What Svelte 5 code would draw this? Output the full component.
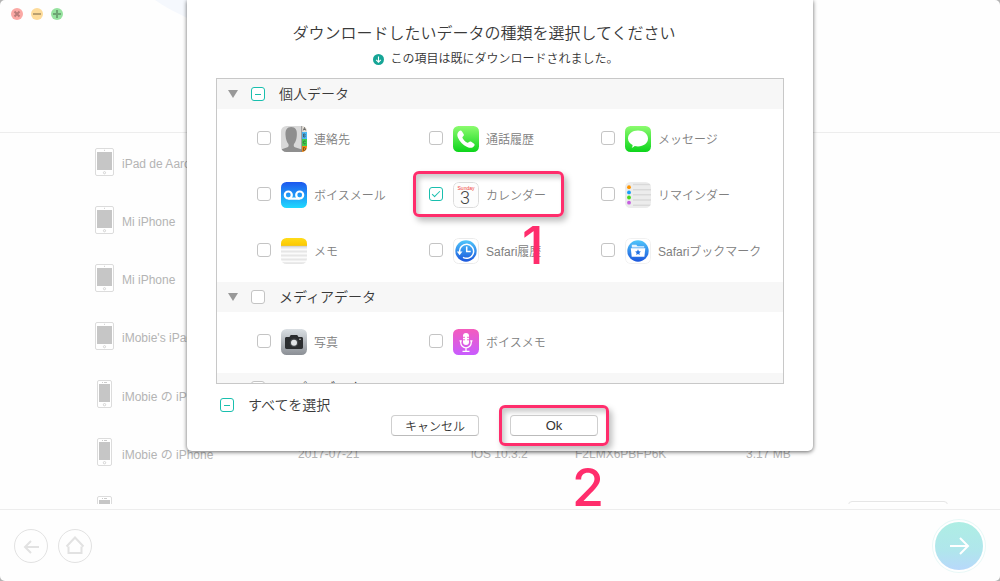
<script>
  const devices = [
    { name: 'iPad de Aaron', kind: 'tablet' },
    { name: 'Mi iPhone', kind: 'tablet' },
    { name: 'Mi iPhone', kind: 'tablet' },
    { name: "iMobie's iPad", kind: 'tablet' },
    { name: 'iMobie の iPhone', kind: 'phone' },
    {
      name: 'iMobie の iPhone',
      kind: 'phone',
      date: '2017-07-21',
      os: 'iOS 10.3.2',
      serial: 'F2LMX6PBFP6K',
      size: '3.17 MB'
    },
    { name: '', kind: 'phone', action: true }
  ];

  let groups = $state([
    {
      title: '個人データ',
      checked: false,
      partial: true,
      items: [
        { id: 'contacts', label: '連絡先', checked: false },
        { id: 'calls', label: '通話履歴', checked: false },
        { id: 'messages', label: 'メッセージ', checked: false },
        { id: 'voicemail', label: 'ボイスメール', checked: false },
        { id: 'calendar', label: 'カレンダー', checked: true, step: '1' },
        { id: 'reminders', label: 'リマインダー', checked: false },
        { id: 'notes', label: 'メモ', checked: false },
        { id: 'history', label: 'Safari履歴', checked: false },
        { id: 'bookmarks', label: 'Safariブックマーク', checked: false }
      ]
    },
    {
      title: 'メディアデータ',
      checked: false,
      partial: false,
      items: [
        { id: 'photos', label: '写真', checked: false },
        { id: 'memos', label: 'ボイスメモ', checked: false }
      ]
    },
    { title: 'アプリデータ', checked: false, partial: false, items: [] }
  ]);

  let all = $state({ checked: false, partial: true });
</script>

{#snippet appIcon(id)}
  <svg class="app-icon" viewBox="0 0 26 26" aria-hidden="true">
    <defs>
      <clipPath id="tile-{id}"><rect width="26" height="26" rx="5.5" /></clipPath>
      <linearGradient id="green-{id}" x2="0" y2="1"><stop stop-color="#8cfb6f" /><stop offset="1" stop-color="#0cd41b" /></linearGradient>
      <linearGradient id="blue-{id}" x2="0" y2="1"><stop stop-color="#1d57ee" /><stop offset="1" stop-color="#1fd9ff" /></linearGradient>
      <linearGradient id="round-{id}" x2="0" y2="1"><stop stop-color="#4fc6fb" /><stop offset="1" stop-color="#1a55dc" /></linearGradient>
      <linearGradient id="grey-{id}" x2="0" y2="1"><stop stop-color="#dadfe3" /><stop offset="1" stop-color="#8b8f95" /></linearGradient>
      <linearGradient id="pink-{id}" x2="0" y2="1"><stop stop-color="#f45cbd" /><stop offset="1" stop-color="#c85cff" /></linearGradient>
      <linearGradient id="gold-{id}" x2="0" y2="1"><stop stop-color="#ffdc1a" /><stop offset="1" stop-color="#fcc800" /></linearGradient>
    </defs>
    <g clip-path="url(#tile-{id})">
      {#if id === 'contacts'}
        <rect width="26" height="26" fill="#d9d9d9" />
        <path d="M0 26v-2.500l6.500-2.200c1.200-.5 1.400-1.800.9-3.200C5.600 16 4.900 12.800 4.600 10 3.900 4 6 1 10.200 1s6.300 3 5.600 9c-.3 2.800-1 6-2.800 8.100-.5 1.400-.3 2.700.9 3.200l7 2.200V26z" fill="#8f8f8f" />
        <rect x="21" width="5" height="6.500" fill="#e8e3da" />
        <rect x="21" y="6" width="5" height="7" fill="#4bb9f5" />
        <rect x="21" y="13" width="5" height="7" fill="#3fd04d" />
        <rect x="21" y="20" width="5" height="6" fill="#f88a10" />
        <path d="M20.700 0v26" stroke="#777" stroke-width=".7" />
        <path d="m22.300 4.500 1.200-3 1.200 3m-2-1h1.600M22.500 8v3h1.200a.8.800 0 0 0 0-1.500.8.800 0 0 0 0-1.500zM24.600 15.300c-1.800-.8-2.300.300-2.300 1.200s1 1.900 2.300 1.100M22.500 21.500v3c3 0 3-3 0-3z" stroke="#333" stroke-width=".6" fill="none" />
      {:else if id === 'calls'}
        <rect width="26" height="26" fill="url(#green-{id})" />
        <path d="M6 5.200c1.400-1.200 2.200-.9 3 .2l1.600 2.500c.6 1 .3 1.700-.4 2.300-.8.700-1 1.200-.5 2.100 1 1.800 2.400 3.200 4.200 4.300.9.500 1.400.3 2.100-.5.600-.7 1.400-.9 2.300-.3l2.400 1.600c1.100.8 1.300 1.600.2 2.900-1.700 2-4 1.800-6.700.6C9.700 18.900 6.700 15.800 5 11.800 3.900 9.200 4 6.900 6 5.200z" fill="#fff" />
      {:else if id === 'messages'}
        <rect width="26" height="26" fill="url(#green-{id})" />
        <path d="M13 4.500c5.700 0 10 3.500 10 8s-4.300 7.900-10 7.900c-1.200 0-2.300-.1-3.300-.4-.7.900-1.600 1.400-3 1.700.6-.8 1-1.700.9-2.700C4.800 17.500 3 15.200 3 12.500c0-4.500 4.300-8 10-8z" fill="#fff" />
      {:else if id === 'voicemail'}
        <rect width="26" height="26" fill="url(#blue-{id})" />
        <g fill="none" stroke="#fff" stroke-width="2.200"><circle cx="7.300" cy="13" r="3.500" /><circle cx="18.700" cy="13" r="3.500" /><path d="M7.300 16.700h11.400" /></g>
      {:else if id === 'calendar'}
        <rect x=".5" y=".5" width="25" height="25" rx="5" fill="#fdfdfd" stroke="#dcdcdc" />
        <text x="13" y="7.500" class="cal-day">Sunday</text>
        <text x="12" y="21.500" class="cal-num">3</text>
      {:else if id === 'reminders'}
        <rect width="26" height="26" fill="#ececec" />
        <path d="M8 2.500h18M8 7.800h18M8 12.800h18M8 18h18M8 23.200h18" stroke="#d9d9d9" stroke-width="1.600" />
        <circle cx="4" cy="5.200" r="1.900" fill="#ff9500" /><circle cx="4" cy="10.400" r="1.900" fill="#1a9ffb" />
        <circle cx="4" cy="15.500" r="1.900" fill="#4cd81f" /><circle cx="4" cy="20.700" r="1.900" fill="#c660e0" />
      {:else if id === 'notes'}
        <rect width="26" height="26" fill="#fbfbfb" />
        <path d="M0 9.500h26M0 13.500h26M0 17.500h26M0 21.500h26M0 25.200h26" stroke="#e6e6e6" stroke-width="1.800" />
        <rect width="26" height="8" fill="url(#gold-{id})" />
        <path d="M0 8.300h26" stroke="#c9c6bd" stroke-width=".8" />
      {:else if id === 'history'}
        <rect x=".5" y=".5" width="25" height="25" rx="5" fill="#fff" stroke="#ebebeb" />
        <circle cx="13" cy="13" r="10.700" fill="url(#round-{id})" />
        <path d="M6.700 14.500A7 7 0 1 1 10 19.300" fill="none" stroke="#fff" stroke-width="1.500" />
        <path d="m3.800 13.500 2.800 3.700 2.900-3.700z" fill="#fff" />
        <path d="M13.700 8.500v5h4" fill="none" stroke="#fff" stroke-width="1.500" />
      {:else if id === 'bookmarks'}
        <rect x=".5" y=".5" width="25" height="25" rx="5" fill="#fff" stroke="#f1f1f1" />
        <circle cx="13" cy="13" r="10.700" fill="url(#round-{id})" />
        <path d="M6.800 9.500V6.800h4.500l1.200 1.400h6.700v1.300z" fill="#fff" opacity=".85" />
        <path d="M5.800 10.300h14.500l-.9 8.400H6.700z" fill="#fff" />
        <path d="m13 11.300.9 1.900 2 .3-1.500 1.500.4 2.100-1.800-1-1.800 1 .4-2.100-1.500-1.500 2-.3z" fill="#2273e4" />
      {:else if id === 'photos'}
        <rect width="26" height="26" fill="url(#grey-{id})" />
        <path d="M4 9.500c0-1 .6-1.600 1.500-1.600h3L9.700 6h6.500l1.300 1.900h3c.9 0 1.500.6 1.500 1.600v8.800c0 1-.6 1.600-1.500 1.600h-15c-.9 0-1.500-.6-1.500-1.600z" fill="#2b2d2f" />
        <circle cx="13" cy="13.700" r="4.300" fill="#46494c" /><circle cx="13" cy="13.700" r="3" fill="#e3e5e7" /><circle cx="19" cy="10.200" r=".8" fill="#ddd" />
      {:else}
        <rect width="26" height="26" fill="url(#pink-{id})" />
        <rect x="10" y="4" width="6" height="12" rx="3" fill="#fff" />
        <path d="M10 8.300h2M14 8.300h2M10 10.800h2M14 10.800h2" stroke="#eb5ccb" stroke-width=".9" />
        <path d="M7.700 11.500v2a5.300 5.300 0 0 0 10.600 0v-2M13 18.800v3.500M9.500 22.300h7M6.500 11.800h2.300M17.200 11.800h2.300" fill="none" stroke="#fff" stroke-width="1.300" />
      {/if}
    </g>
  </svg>
{/snippet}

<div class="window">
  <header>
    <div class="lights">
      <button class="light red" aria-label="閉じる"><svg viewBox="0 0 12 12"><path d="m3.500 3.500 5 5m0-5-5 5" /></svg></button>
      <button class="light amber" aria-label="しまう"><svg viewBox="0 0 12 12"><path d="M2 6h8" /></svg></button>
      <button class="light green" aria-label="拡大"><svg viewBox="0 0 12 12"><path d="M2 6h8M6 2v8" /></svg></button>
    </div>
    <svg class="swoosh" viewBox="0 0 100 40" aria-hidden="true"><path d="M0 0h100v40H80C50 26 20 14 0 0z" fill="#f5f8fd" /></svg>
  </header>

  <ul class="devices">
    {#each devices as d}
      <li>
        <span class="device">
          {#if d.kind === 'tablet'}
            <svg width="19" height="28" viewBox="0 0 19 28" aria-hidden="true">
              <rect x=".5" y=".5" width="18" height="27" rx="1.500" fill="#fff" stroke="#dcdcdc" />
              <rect x="2" y="4" width="15" height="18" fill="#c6c6c6" /><circle cx="9.500" cy="24.700" r="1.100" fill="none" stroke="#ccc" stroke-width=".8" /><path d="M9 2.300h1" stroke="#ccc" />
            </svg>
          {:else}
            <svg width="19" height="28" viewBox="0 0 19 28" aria-hidden="true">
              <rect x="2.500" y=".5" width="14" height="27" rx="1.500" fill="#fff" stroke="#dcdcdc" />
              <rect x="4" y="4" width="11" height="18" fill="#c6c6c6" /><circle cx="9.500" cy="24.700" r="1.200" fill="none" stroke="#ccc" stroke-width=".8" /><path d="M7 2.500h1M9 2.500h3" stroke="#ccc" />
            </svg>
          {/if}
          <span>{d.name}</span>
        </span>
        <span>{d.date ?? ''}</span>
        <span>{d.os ?? ''}</span>
        <span>{d.serial ?? ''}</span>
        <span>{d.size ?? ''}</span>
        {#if d.action}<button class="row-action" aria-label="選択"></button>{/if}
      </li>
    {/each}
  </ul>

  <footer>
    <button class="nav" aria-label="戻る"><svg viewBox="0 0 34 34"><path d="M25 18H11M17 12l-6 6 6 6" /></svg></button>
    <button class="nav" aria-label="ホーム"><svg viewBox="0 0 34 34"><path d="m8.500 17.500 8.500-9 8.500 9M10.500 17.500V24h13v-6.500" /></svg></button>
    <button class="next" aria-label="次へ"><svg viewBox="0 0 48 48"><path d="M15 24h18M25 16l8 8-8 8" /></svg></button>
  </footer>

  <section class="sheet" role="dialog" aria-labelledby="sheet-title">
    <h1 id="sheet-title">ダウンロードしたいデータの種類を選択してください</h1>
    <p class="hint">
      <svg width="11" height="11" viewBox="0 0 11 11" aria-hidden="true"><circle cx="5.500" cy="5.500" r="5.500" fill="#16a596" /><path d="M5.500 2.500v5.500M3.200 5.800l2.300 2.300 2.300-2.300" fill="none" stroke="#fff" stroke-width="1.100" /></svg>
      この項目は既にダウンロードされました。
    </p>

    <div class="panel">
      {#each groups as g}
        <label class="group-head">
          <i class="twisty"></i>
          <input type="checkbox" bind:checked={g.checked} bind:indeterminate={g.partial} />
          <span class="caption">{g.title}</span>
        </label>
        {#if g.items.length}
          <div class="grid">
            {#each g.items as item}
              <label class="item">
                <input type="checkbox" bind:checked={item.checked} />
                {@render appIcon(item.id)}
                <span class="caption">{item.label}</span>
                {#if item.step}
                  <span class="ring ring-item"></span>
                  <b class="step step-item">{item.step}</b>
                {/if}
              </label>
            {/each}
          </div>
        {/if}
      {/each}
    </div>

    <label class="select-all">
      <input type="checkbox" bind:checked={all.checked} bind:indeterminate={all.partial} />
      すべてを選択
    </label>
    <div class="actions">
      <button class="push">キャンセル</button>
      <div class="marked">
        <button class="push ok">Ok</button>
        <span class="ring ring-ok"></span>
        <b class="step step-ok">2</b>
      </div>
    </div>
  </section>
</div>

<style>
  :global(body) {
    margin: 0;
    background: #b4b4b4;
  }
  .window {
    position: relative;
    display: flex;
    flex-direction: column;
    height: 100vh;
    overflow: hidden;
    border-radius: 5px;
    background: #fefefe;
    font-family: 'Liberation Sans', 'Noto Sans CJK JP', sans-serif;
    font-size: 12px;
    color: #333;
  }
  button {
    padding: 0;
    font: inherit;
    color: inherit;
  }
  svg {
    display: block;
    flex: none;
  }
  header {
    position: relative;
    flex: none;
    height: 132px;
    border-bottom: 1px solid #ededed;
  }
  .lights {
    display: flex;
    gap: 8px;
    padding: 8px 11px;
  }
  .light {
    width: 12px;
    height: 12px;
    border: 0;
    border-radius: 50%;
  }
  .light svg {
    width: 12px;
    height: 12px;
    fill: none;
    stroke: #0004;
    stroke-width: 2;
  }
  .red { background: #fba9a5; }
  .amber { background: #fddb9a; }
  .green { background: #96e29f; }
  .swoosh {
    position: absolute;
    top: 0;
    left: 155px;
    width: 100px;
  }
  .devices {
    flex: 1;
    min-height: 0;
    margin: 0 0 5px;
    padding: 0;
    overflow: hidden;
    list-style: none;
    color: #b4b4b4;
  }
  .devices li {
    display: grid;
    grid-template-columns: 203fr 173fr 104fr 171fr 102fr 100fr;
    align-items: center;
    height: 58px;
    padding: 0 52px 0 95px;
    white-space: nowrap;
  }
  .devices span {
    padding-top: 3px;
  }
  .devices .device {
    display: flex;
    align-items: center;
    gap: 8px;
    padding: 0;
  }
  .row-action {
    height: 18px;
    border: 1px solid #e6e6e6;
    border-radius: 4px;
    background: #fff;
  }
  footer {
    display: flex;
    flex: none;
    align-items: center;
    gap: 10px;
    height: 71px;
    padding: 0 17px 0 14px;
    border-top: 1px solid #ededed;
  }
  .nav {
    width: 34px;
    height: 34px;
    border: 1px solid #e2e2e2;
    border-radius: 50%;
    background: none;
  }
  .nav svg {
    margin: -1px;
    width: 34px;
    fill: none;
    stroke: #e2e2e2;
    stroke-width: 2;
  }
  .next {
    width: 48px;
    height: 48px;
    margin-left: auto;
    border: 0;
    border-radius: 50%;
    background: linear-gradient(#aeeee4, #b0e6ec 60%, #b8d8fb);
    box-shadow: 0 0 0 2px #fff, 0 0 0 3px #e9f8f7;
  }
  .next svg {
    fill: none;
    stroke: #fff;
    stroke-width: 2;
  }
  .sheet {
    position: absolute;
    top: 0;
    left: 50%;
    box-sizing: border-box;
    width: 626px;
    max-width: 94vw;
    padding: 23px 29px 15px;
    transform: translateX(-50%);
    border-radius: 0 0 5px 5px;
    background: #fff;
    box-shadow: 0 1px 4px #0009;
  }
  h1 {
    margin: 0 32px 0 0;
    font-size: 16px;
    font-weight: 350;
    line-height: 22px;
    text-align: center;
    color: #3a3a3a;
  }
  .hint {
    display: flex;
    align-items: center;
    justify-content: center;
    gap: 6px;
    margin: 5px 8px 10px 0;
    font-weight: 350;
    line-height: 18px;
  }
  .panel {
    height: 304px;
    overflow: hidden;
    border: 1px solid #c8c8c8;
  }
  .group-head {
    display: flex;
    align-items: center;
    height: 30px;
    padding-left: 11px;
    background: #f7f7f7;
    font-size: 14px;
    font-weight: 350;
    color: #3a3a3a;
  }
  .caption {
    padding-bottom: 2px;
  }
  .twisty {
    margin-right: 13px;
    border: 5px solid transparent;
    border-top: 8px solid #999;
    border-bottom: 0;
  }
  .group-head input {
    margin-right: 14px;
  }
  input {
    position: relative;
    flex: none;
    width: 14px;
    height: 14px;
    margin: 0;
    appearance: none;
    border: 1px solid #c4c4c4;
    border-radius: 3px;
    background: #fff;
  }
  input:checked,
  input:indeterminate {
    border-color: #19bfae;
  }
  input:indeterminate::after {
    content: '';
    position: absolute;
    inset: 6px 3px auto;
    height: 1px;
    background: #19bfae;
  }
  input:checked::after {
    content: '';
    position: absolute;
    top: 3px;
    left: 2px;
    width: 7px;
    height: 3px;
    border: solid #19bfae;
    border-width: 0 0 1px 1px;
    transform: rotate(-45deg);
  }
  .grid {
    display: grid;
    grid-template-columns: repeat(3, 172px);
    row-gap: 30px;
    padding: 17px 0 18px 40px;
  }
  .item {
    position: relative;
    display: flex;
    align-items: center;
    font-weight: 350;
    color: #808080;
    white-space: nowrap;
  }
  .item input {
    margin-bottom: 2px;
  }
  .app-icon {
    width: 26px;
    height: 26px;
    margin: 0 7px 0 10px;
  }
  .cal-day {
    font-size: 5px;
    font-weight: 400;
    text-anchor: middle;
    fill: #ef3b36;
  }
  .cal-num {
    font-family: Roboto, sans-serif;
    font-size: 18px;
    font-weight: 300;
    text-anchor: middle;
    fill: #444;
  }
  .ring {
    position: absolute;
    z-index: 1;
    box-sizing: border-box;
    border: 3px solid #ff2d6c;
    border-radius: 6px;
    box-shadow: 3px 4px 6px #0004, inset 3px 4px 5px #0003;
    pointer-events: none;
  }
  .ring-item {
    inset: -11px 37px -9px -16px;
  }
  .ring-ok {
    inset: -10px -11px;
  }
  .step {
    position: absolute;
    z-index: 2;
    font-family: Inter, sans-serif;
    font-size: 52px;
    font-weight: 500;
    line-height: 52px;
    color: #ff2d6c;
  }
  .step-item {
    top: 38px;
    left: 93px;
  }
  .step-ok {
    top: 47px;
    left: 62px;
  }
  .select-all {
    display: flex;
    align-items: center;
    gap: 14px;
    width: max-content;
    margin-top: 11px;
    padding-left: 4px;
    font-size: 14px;
    line-height: 20px;
    color: #3a3a3a;
    font-weight: 350;
  }
  .actions {
    display: flex;
    justify-content: center;
    gap: 31px;
    margin-right: 11px;
  }
  .marked {
    position: relative;
  }
  .push {
    display: block;
    width: 88px;
    height: 21px;
    border: 1px solid #cfcfcf;
    border-bottom-color: #bbb;
    border-radius: 4px;
    background: #fff;
    font-weight: 350;
  }
  .ok {
    font-size: 13px;
  }
</style>
